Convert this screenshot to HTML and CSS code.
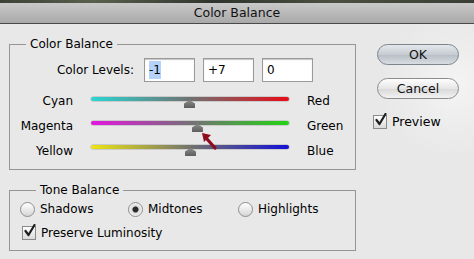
FILE: index.html
```html
<!DOCTYPE html>
<html lang="en">
<head>
    <meta charset="UTF-8">
    <title>Color Balance</title>
    <link rel="stylesheet" href="styles.css">
</head>
<body>

<div class="window">
    <div class="photo-strip"></div>
    <div class="titlebar">Color Balance</div>

    <div class="dialog">
        <div class="main">
            <fieldset class="group color-group">
                <legend>Color Balance</legend>
                <div class="level-row">
                    <span class="level-label">Color Levels:</span>
                    <div class="field"><span class="selected">-1</span></div>
                    <div class="field">+7</div>
                    <div class="field">0</div>
                </div>
                <div class="sliders">
                    <span class="left-label">Cyan</span>
                    <div class="track cyan-red"><span class="thumb" style="left: 49.5%"></span></div>
                    <span class="right-label">Red</span>

                    <span class="left-label">Magenta</span>
                    <div class="track magenta-green"><span class="thumb" style="left: 53.5%"></span></div>
                    <span class="right-label">Green</span>

                    <span class="left-label">Yellow</span>
                    <div class="track yellow-blue"><span class="thumb" style="left: 50%"></span></div>
                    <span class="right-label">Blue</span>
                </div>
            </fieldset>

            <fieldset class="group tone-group">
                <legend>Tone Balance</legend>
                <div class="radio-row">
                    <span class="radio-item shadows"><span class="radio"></span>Shadows</span>
                    <span class="radio-item midtones"><span class="radio checked"></span>Midtones</span>
                    <span class="radio-item"><span class="radio"></span>Highlights</span>
                </div>
                <div class="check-row">
                    <span class="checkbox">
                        <svg width="14" height="14" viewBox="0 0 14 14"><path d="M2.5 7 L5.5 11 L11.5 1" fill="none" stroke="#1e1e1e" stroke-width="2.2" stroke-linecap="round" stroke-linejoin="round"/></svg>
                    </span>Preserve Luminosity
                </div>
            </fieldset>
        </div>

        <div class="side">
            <button class="pill default">OK</button>
            <button class="pill">Cancel</button>
            <div class="preview">
                <span class="checkbox">
                    <svg width="14" height="14" viewBox="0 0 14 14"><path d="M2.5 7 L5.5 11 L11.5 1" fill="none" stroke="#1e1e1e" stroke-width="2.2" stroke-linecap="round" stroke-linejoin="round"/></svg>
                </span>Preview
            </div>
        </div>
    </div>

    <!-- red pointer at the magenta thumb -->
    <svg class="pointer" width="24" height="24" viewBox="0 0 24 24">
        <path d="M17 19 L9 10" stroke="#8c0c1e" stroke-width="3.2" stroke-linecap="round"/>
        <polygon points="4,4 13,6 6,13" fill="#8c0c1e"/>
    </svg>
</div>

</body>
</html>
```

FILE: styles.css
```css
html, body {
    margin: 0;
    padding: 0;
}
body {
    width: 474px;
    height: 259px;
    overflow: hidden;
    background: #e8e8e8;
    font-family: "DejaVu Sans", sans-serif;
    font-size: 12px;
    color: #000;
}
.window {
    position: relative;
    height: 259px;
    background: radial-gradient(circle at 455px 85px, #f4f4f4 0, #ececec 45px, #e8e8e8 75px);
}
.photo-strip {
    height: 3px;
    background: linear-gradient(to right, #3c4236, #5a5f4d 20%, #2f352d 45%, #4b4f40 70%, #3a3f35);
}
.titlebar {
    height: 20px;
    line-height: 20px;
    text-align: center;
    font-size: 12.5px;
    color: #111;
    background: linear-gradient(#c9c9c9, #a9a9a9);
    border-bottom: 1px solid #4a4a4a;
}
.dialog {
    display: flex;
    padding: 13px 0 0 9px;
}
.main {
    width: 347px;
}
.group {
    margin: 0;
    padding: 0;
    border: 1px solid #959595;
    min-width: 0;
}
.group legend {
    margin-left: 16px;
    padding: 0 4px;
    line-height: 15px;
}
.color-group {
    padding-bottom: 7px;
}
.level-row {
    display: flex;
    align-items: center;
    margin-top: 6px;
}
.level-label {
    width: 124px;
    text-align: right;
    margin-right: 10px;
}
.field {
    height: 22px;
    line-height: 22px;
    border: 1px solid #9a9a9a;
    box-shadow: inset 0 1px 1px #c4c4c4;
    background: #fff;
    padding-left: 4px;
    width: 45px;
    margin-right: 8px;
}
.selected {
    background: #b5d3f8;
    padding: 2px 0;
}
.sliders {
    display: grid;
    grid-template-columns: 63px 198px auto;
    column-gap: 18px;
    grid-auto-rows: 25px;
    align-items: center;
    margin-top: 5px;
}
.left-label {
    text-align: right;
    padding-top: 3px;
}
.right-label {
    padding-top: 3px;
}
.track {
    position: relative;
    height: 4px;
    border-radius: 2px;
    box-shadow: 0 0 0 0.5px rgba(0, 0, 0, 0.25);
    margin-top: -1px;
}
.cyan-red {
    background: linear-gradient(to right, #2ad6d2, #6f7272 50%, #e80c18);
}
.magenta-green {
    margin-top: -3px;
    background: linear-gradient(to right, #e414e0, #767076 50%, #22d414);
}
.yellow-blue {
    margin-top: -5px;
    background: linear-gradient(to right, #ece414, #73736b 50%, #1410d8);
}
.thumb {
    position: absolute;
    top: 3px;
    width: 11px;
    height: 8px;
    margin-left: -5px;
    background: linear-gradient(#8a8a8a, #5e5e5e);
    clip-path: polygon(50% 0, 100% 45%, 100% 100%, 0 100%, 0 45%);
}
.tone-group {
    margin-top: 13px;
    padding: 2px 0 8px 10px;
}
.radio-row {
    display: flex;
    align-items: center;
    height: 18px;
}
.radio-item {
    display: flex;
    align-items: center;
    gap: 5px;
}
.shadows {
    width: 108px;
}
.midtones {
    width: 110px;
}
.radio {
    width: 13px;
    height: 13px;
    border-radius: 50%;
    border: 1px solid #8e8e8e;
    background: linear-gradient(#ffffff, #d6d6d6);
}
.radio.checked {
    background: radial-gradient(circle, #2a2a2a 0, #2a2a2a 2.5px, #dcdcdc 3.5px, #f6f6f6 7px);
}
.check-row {
    display: flex;
    align-items: center;
    gap: 5px;
    height: 18px;
    margin-top: 6px;
    padding-left: 2px;
}
.checkbox {
    position: relative;
    width: 12px;
    height: 12px;
    border: 1px solid #8a8a8a;
    background: linear-gradient(#ffffff, #d9d9d9);
}
.checkbox svg {
    position: absolute;
    left: 0;
    top: -3px;
}
.side {
    margin-left: 21px;
    display: flex;
    flex-direction: column;
    width: 82px;
}
.pill {
    font-family: "DejaVu Sans", sans-serif;
    font-size: 12.5px;
    color: #111;
    height: 21px;
    padding: 0;
    border-radius: 11px;
    border: 1px solid #8c8c8c;
    background: linear-gradient(#fdfdfd, #e6e6e6 50%, #d8d8d8 51%, #f2f2f2);
}
.pill.default {
    margin-top: 7px;
    border-color: #7e848c;
    background: linear-gradient(#e4e8ec, #c6ccd2 50%, #b6bdc4 51%, #d8dde2);
}
.pill + .pill {
    margin-top: 13px;
}
.preview {
    display: flex;
    align-items: center;
    gap: 5px;
    margin-top: 15px;
    margin-left: -4px;
    font-size: 12.5px;
}
.pointer {
    position: absolute;
    left: 198px;
    top: 129px;
}
```
